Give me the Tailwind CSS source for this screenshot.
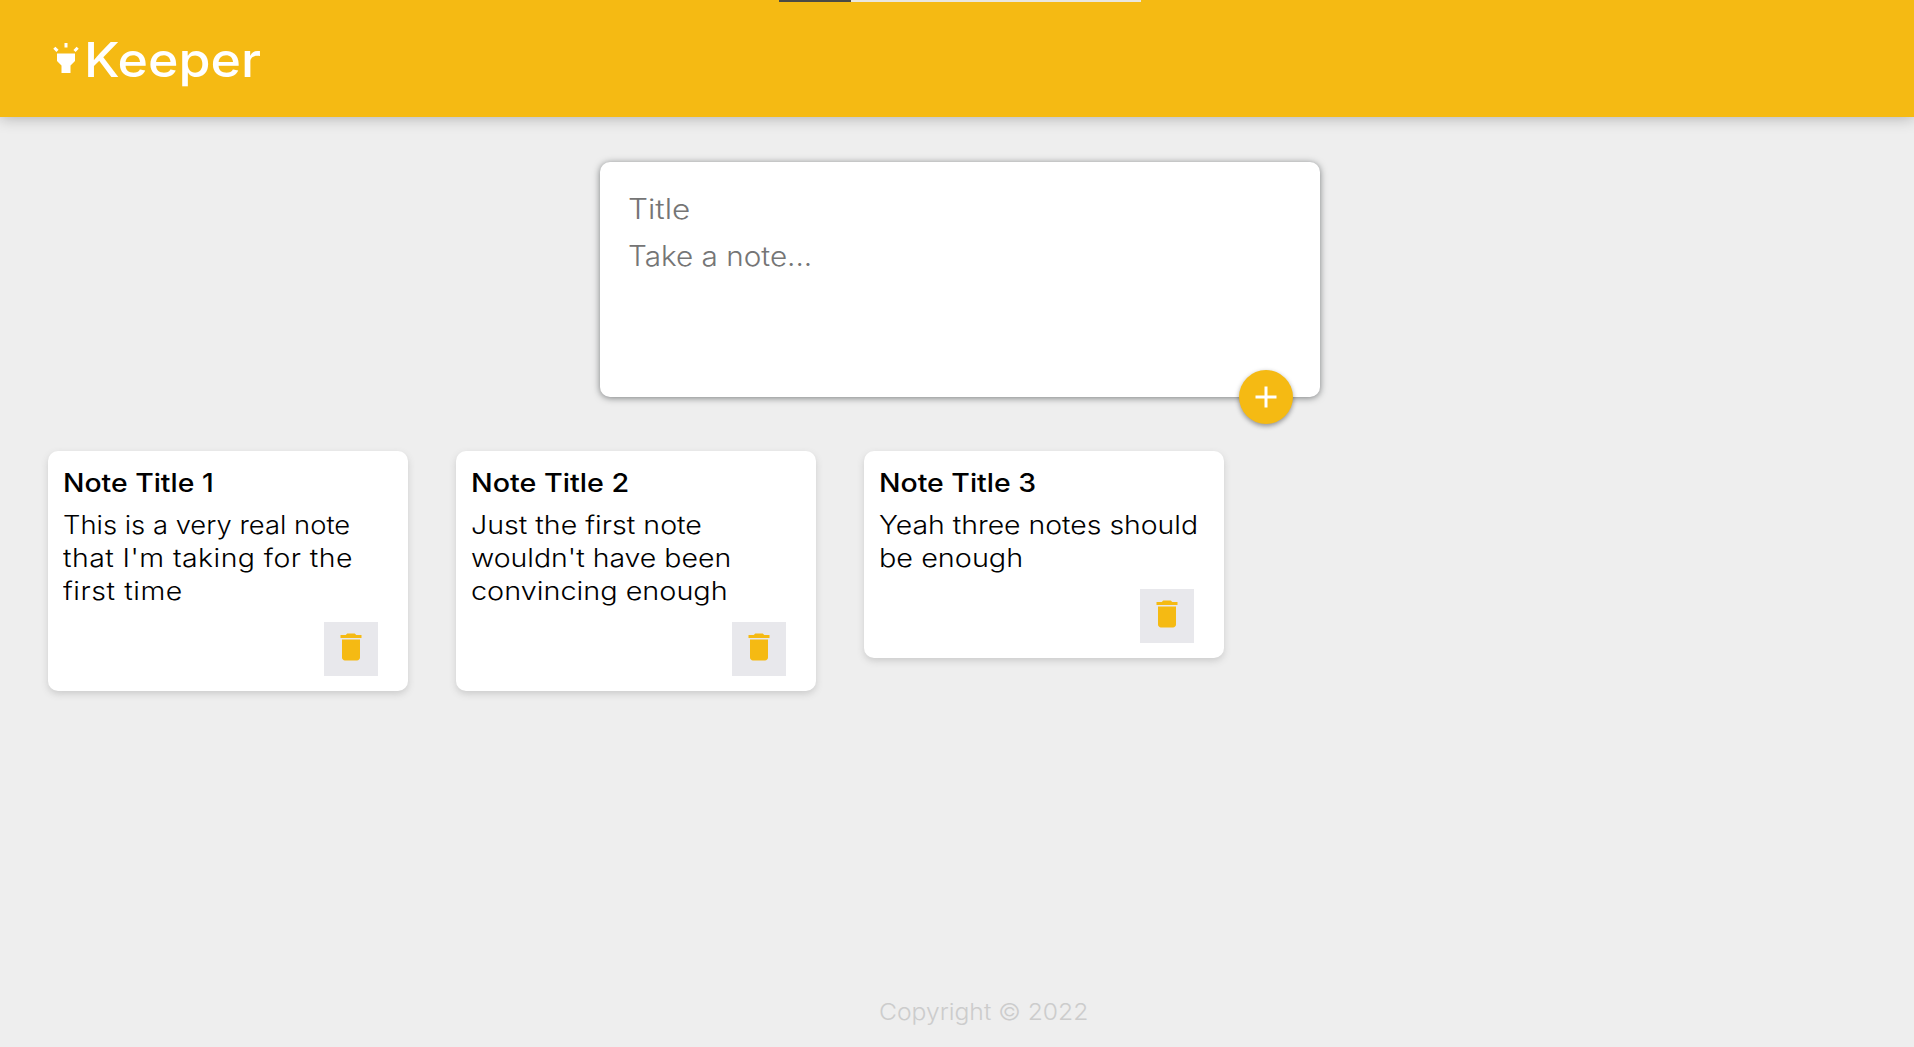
<!DOCTYPE html>
<html lang="en">
<head>
<meta charset="utf-8">
<title>Keeper</title>
<script src="https://cdn.jsdelivr.net/npm/@tailwindcss/browser@4"></script>
</head>
<body class="relative flex h-screen flex-col overflow-hidden bg-[#eee] font-['Inter',sans-serif] font-light text-black">
  <div class="absolute left-[779px] top-0 flex h-0.5 w-[362px] bg-[#e9e7df]"><div class="w-[72px] bg-[#4b4a45]"></div></div>
  <header class="flex h-[117px] shrink-0 items-start bg-[#f5ba13] pl-12 pt-[29px] text-white shadow-[0_0_15px_rgba(0,0,0,0.3)]">
    <svg class="mt-[11px] size-9" viewBox="0 0 24 24" fill="currentColor"><path d="m6 14 3 3v5h6v-5l3-3V9H6zm5-12h2v3h-2zM3.5 5.875 4.914 4.46l2.12 2.122L5.62 7.997zm13.46.71 2.123-2.12 1.414 1.414L18.375 8z"/></svg>
    <h1 class="origin-left scale-x-[1.08] text-[48px] font-medium leading-[62px]">Keeper</h1>
  </header>
  <main class="flex grow flex-col">
    <form class="relative ml-[600px] mt-[45px] h-[235px] w-[720px] rounded-[10px] bg-white pl-7 pt-6 text-[27.7px] leading-[47px] text-[#757575] shadow-[0_1px_7px_rgb(120,123,124)]">
      <p class="origin-left scale-x-[1.136]">Title</p>
      <p class="origin-left scale-x-[1.072]">Take a note...</p>
      <button type="button" class="absolute -bottom-[27px] right-[27px] flex size-[54px] items-center justify-center rounded-full bg-[#f5ba13] text-white shadow-[0_2px_5px_rgba(0,0,0,0.4)]">
        <svg class="size-9" viewBox="0 0 24 24" fill="currentColor"><path d="M19 13h-6v6h-2v-6H5v-2h6V5h2v6h6z"/></svg>
      </button>
    </form>
    <section class="ml-12 mt-[54px] flex items-start gap-12 text-[25.4px] leading-[33px]">
      <article class="flex w-[360px] flex-col rounded-[10px] bg-white p-[15px] shadow-[0_3px_7px_#ccc]">
        <h2 class="mb-[9px] origin-left scale-x-[1.117] font-medium">Note Title 1</h2>
        <p class="whitespace-nowrap"><span class="block origin-left scale-x-[1.078]">This is a very real note</span><span class="block origin-left scale-x-[1.12] tracking-[0.4px]">that I'm taking for the</span><span class="block origin-left scale-x-[1.12] tracking-[0.5px]">first time</span></p>
        <button class="mr-[15px] mt-[15px] flex size-[54px] justify-center self-end bg-[#e8e8ec] pt-[7px] text-[#f5ba13]"><svg class="size-9" viewBox="0 0 24 24" fill="currentColor"><path d="M6 19c0 1.1.9 2 2 2h8c1.1 0 2-.9 2-2V7H6zM19 4h-3.5l-1-1h-5l-1 1H5v2h14z"/></svg></button>
      </article>
      <article class="flex w-[360px] flex-col rounded-[10px] bg-white p-[15px] shadow-[0_3px_7px_#ccc]">
        <h2 class="mb-[9px] origin-left scale-x-[1.13] font-medium">Note Title 2</h2>
        <p class="whitespace-nowrap"><span class="block origin-left scale-x-[1.125]">Just the first note</span><span class="block origin-left scale-x-[1.121]">wouldn't have been</span><span class="block origin-left scale-x-[1.135]">convincing enough</span></p>
        <button class="mr-[15px] mt-[15px] flex size-[54px] justify-center self-end bg-[#e8e8ec] pt-[7px] text-[#f5ba13]"><svg class="size-9" viewBox="0 0 24 24" fill="currentColor"><path d="M6 19c0 1.1.9 2 2 2h8c1.1 0 2-.9 2-2V7H6zM19 4h-3.5l-1-1h-5l-1 1H5v2h14z"/></svg></button>
      </article>
      <article class="flex w-[360px] flex-col rounded-[10px] bg-white p-[15px] shadow-[0_3px_7px_#ccc]">
        <h2 class="mb-[9px] origin-left scale-x-[1.12] font-medium">Note Title 3</h2>
        <p class="whitespace-nowrap"><span class="block origin-left scale-x-[1.118]">Yeah three notes should</span><span class="block origin-left scale-x-[1.135]">be enough</span></p>
        <button class="mr-[15px] mt-[15px] flex size-[54px] justify-center self-end bg-[#e8e8ec] pt-[7px] text-[#f5ba13]"><svg class="size-9" viewBox="0 0 24 24" fill="currentColor"><path d="M6 19c0 1.1.9 2 2 2h8c1.1 0 2-.9 2-2V7H6zM19 4h-3.5l-1-1h-5l-1 1H5v2h14z"/></svg></button>
      </article>
    </section>
  </main>
  <footer class="flex h-[50px] shrink-0 pl-[879px] text-[23px] leading-[30px] text-[#ccc]"><p class="origin-left scale-x-[1.072]">Copyright © 2022</p></footer>
</body>
</html>
